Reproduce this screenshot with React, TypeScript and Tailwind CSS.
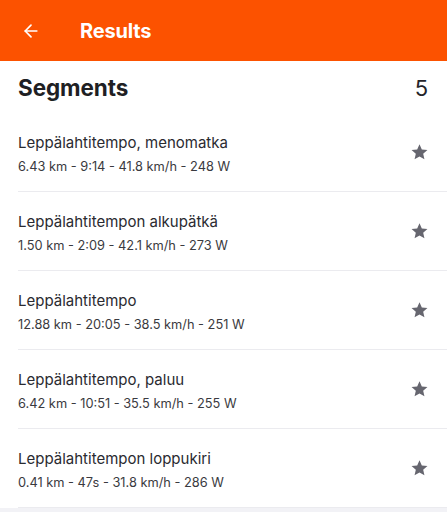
import { ArrowLeft } from "lucide-react";

const segments = [
  { name: "Leppälahtitempo, menomatka", stats: "6.43 km - 9:14 - 41.8 km/h - 248 W" },
  { name: "Leppälahtitempon alkupätkä", stats: "1.50 km - 2:09 - 42.1 km/h - 273 W" },
  { name: "Leppälahtitempo", stats: "12.88 km - 20:05 - 38.5 km/h - 251 W" },
  { name: "Leppälahtitempo, paluu", stats: "6.42 km - 10:51 - 35.5 km/h - 255 W" },
  { name: "Leppälahtitempon loppukiri", stats: "0.41 km - 47s - 31.8 km/h - 286 W" },
];

function Star() {
  return (
    <svg width="19" height="18" viewBox="0 0 24 24" className="fill-[#66666f]">
      <path d="M12 1.8l3.1 6.9 7.5.7-5.7 5 1.7 7.4L12 17.9l-6.6 3.9 1.7-7.4-5.7-5 7.5-.7z" />
    </svg>
  );
}

export default function App() {
  return (
    <div className="w-[447px] h-[512px] overflow-hidden bg-[#f2f2f6] font-['Inter',sans-serif] text-[#1f1f24]">
      <header className="h-[61px] bg-[#fc5200] flex items-center px-[21px] gap-[39px] text-white">
        <ArrowLeft size={20} strokeWidth={2} />
        <h1 className="text-[20px] font-bold tracking-[-0.2px]">Results</h1>
      </header>

      <div className="bg-white">
        <div className="h-[52px] flex items-center justify-between pl-[18px] pr-[19px] pt-[2px]">
          <h2 className="text-[22.5px] font-bold tracking-[-0.1px]">Segments</h2>
          <span className="text-[22px] text-[#24242a]">5</span>
        </div>

        {segments.map((s) => (
          <div key={s.name} className="pl-[18px]">
            <div className="h-[79px] flex items-center justify-between pr-[18px] border-b border-[#ebebef]">
              <div className="flex flex-col gap-[7px] pt-[5px]">
                <span className="text-[15px] leading-[18px] text-[#2a2a30]">{s.name}</span>
                <span className="text-[12.8px] leading-[16px] text-[#3a3a40]">{s.stats}</span>
              </div>
              <Star />
            </div>
          </div>
        ))}
      </div>
    </div>
  );
}
